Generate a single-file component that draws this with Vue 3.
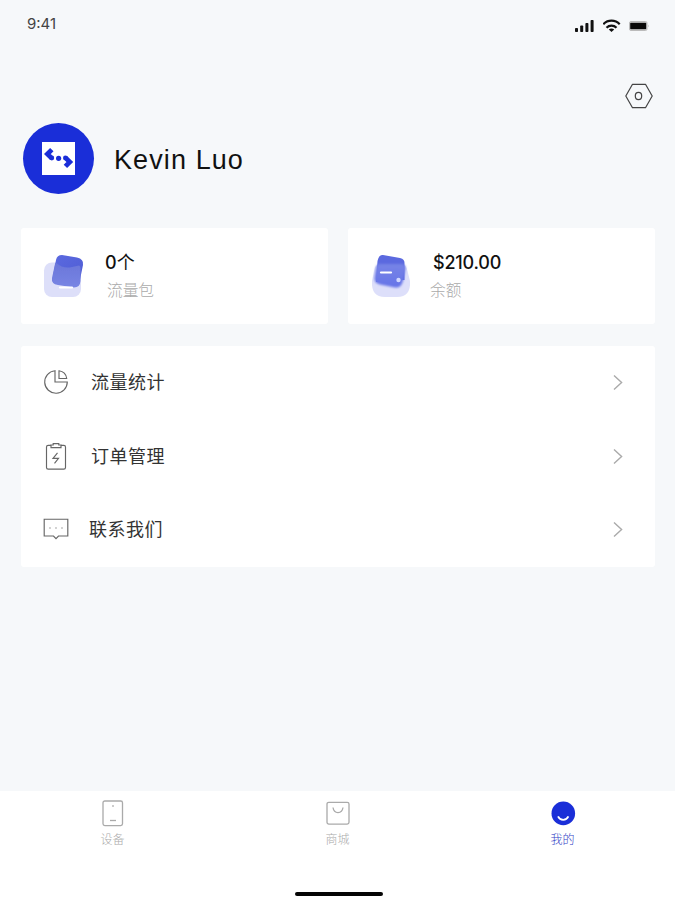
<template>
  <div class="page">
    <header class="status-bar">
      <span class="time">9:41</span>
      <div class="status-icons">
        <svg width="20" height="14" viewBox="0 0 20 14" fill="#111">
          <rect x="0" y="9" width="3" height="4" rx="0.8" />
          <rect x="5.2" y="6.5" width="3" height="6.5" rx="0.8" />
          <rect x="10.4" y="4" width="3" height="9" rx="0.8" />
          <rect x="15.6" y="1" width="3" height="12" rx="0.8" />
        </svg>
        <svg width="18" height="14" viewBox="0 0 18 14" fill="none" stroke="#111" stroke-width="2.2">
          <path d="M0.3 5.2C4.7 .5 12.3 .5 16.7 5.2" />
          <path d="M3.5 8.7C6.2 5.9 10.8 5.9 13.5 8.7" />
          <path d="M5.8 10.4C7.3 9.2 9.7 9.2 11.2 10.4L8.5 13Z" fill="#111" stroke="none" />
        </svg>
        <svg width="21" height="10" viewBox="0 0 21 10">
          <rect x="0.5" y="0.5" width="17.5" height="9" rx="1.5" fill="#ddd" stroke="#bbb" />
          <rect x="1.2" y="1.8" width="16" height="6.4" rx="0.6" fill="#080808" />
          <path d="M19 3.5Q20.5 5 19 6.5Z" fill="#bbb" />
        </svg>
      </div>
    </header>

    <div class="toolbar">
      <svg width="28" height="26" viewBox="0 0 28 26" fill="none" stroke="#444" stroke-width="1.2">
        <path d="M7.5 1.3H20.5L27.2 13L20.5 24.7H7.5L0.8 13Z" stroke-linejoin="round" />
        <ellipse cx="13.5" cy="13" rx="3.2" ry="3.6" />
      </svg>
    </div>

    <section class="profile">
      <div class="avatar">
        <svg width="33" height="33" viewBox="0 0 33 33">
          <rect width="33" height="33" fill="#fff" />
          <g fill="none" stroke="#1a2ed8" stroke-width="4.8">
            <path d="M9.8 7.6L5.4 12L9.8 16.4" />
            <path d="M23.4 15.6L27.8 20L23.4 24.4" />
          </g>
          <g fill="#1a2ed8">
            <circle cx="9.8" cy="16" r="2.4" />
            <circle cx="16.6" cy="16.3" r="2.6" />
            <circle cx="23.4" cy="16" r="2.4" />
          </g>
        </svg>
      </div>
      <h1 class="name">Kevin Luo</h1>
    </section>

    <section class="cards">
      <div class="card">
        <svg class="cube" width="42" height="46" viewBox="0 0 42 46">
          <defs>
            <linearGradient id="packBack" x1="0" y1="0" x2="0.8" y2="1">
              <stop offset="0" stop-color="#5b6ae0" />
              <stop offset="1" stop-color="#4f5cd4" />
            </linearGradient>
            <linearGradient id="packFront" x1="0" y1="0" x2="0" y2="1">
              <stop offset="0" stop-color="#6a76d9" />
              <stop offset="1" stop-color="#7885e4" />
            </linearGradient>
            <filter id="packSoft" x="-20%" y="-20%" width="140%" height="140%">
              <feGaussianBlur stdDeviation="0.7" />
            </filter>
          </defs>
          <rect x="1" y="9.5" width="37" height="34.5" rx="8" fill="#dddff9" />
          <path d="M19 2L34 4.5Q41 6 40 12L36.5 29Q35.5 34 30 33L14 29Q9 28 10 23L13 7Q14 2 19 2Z" fill="url(#packBack)" />
          <path d="M13.5 10Q20 16 29 14L36 12.5Q38 13 37.5 17V28Q37 34.5 31 34.5L15 32Q8 31 9 25L12 11Q12.5 9 13.5 10Z" fill="url(#packFront)" filter="url(#packSoft)" />
          <path d="M17 34.5H29" stroke="#fff" stroke-width="2.2" stroke-linecap="round" />
        </svg>
        <div class="card-text">
          <strong>0<i>个</i></strong>
          <span>流量包</span>
        </div>
      </div>
      <div class="card balance">
        <svg class="cube" width="42" height="46" viewBox="0 0 42 46">
          <defs>
            <linearGradient id="moneyFront" x1="0" y1="0" x2="0" y2="1">
              <stop offset="0" stop-color="#7784e6" />
              <stop offset="1" stop-color="#6674e8" />
            </linearGradient>
            <filter id="moneySoft" x="-20%" y="-20%" width="140%" height="140%">
              <feGaussianBlur stdDeviation="0.8" />
            </filter>
          </defs>
          <path d="M10 11H32Q36 11 37.5 18L40 28Q41 44 27 44H15Q1 44 2 28L4 18Q5 11 10 11Z" fill="#dddffa" />
          <path d="M13 2L30 5Q35 6 34.5 11V27L6 29L7.5 8Q9 1 13 2Z" fill="#5b69df" />
          <path d="M10 11H31Q36 11 35.5 16L33 28Q31 35.5 25 34.5L10 31.5Q4 30 4.5 25L6 15Q6.5 11 10 11Z" fill="url(#moneyFront)" filter="url(#moneySoft)" />
          <path d="M11 19.5H21" stroke="#fff" stroke-width="2.2" stroke-linecap="round" />
          <circle cx="28.5" cy="27" r="2.2" fill="#d0d7ff" />
        </svg>
        <div class="card-text">
          <strong>$210.00</strong>
          <span>余额</span>
        </div>
      </div>
    </section>

    <ul class="menu">
      <li v-for="item in menuItems" :key="item.icon" :class="item.icon">
        <svg class="menu-icon" width="26" height="28" viewBox="0 0 26 28" fill="none" stroke="#666" stroke-width="1.15">
          <template v-if="item.icon === 'chart'">
            <path d="M12 1.7A11.3 11.3 0 1 0 24.3 13H12Z" />
            <path d="M16 1.8V9.5H23.7A9 9 0 0 0 16 1.8Z" />
          </template>
          <template v-else-if="item.icon === 'order'">
            <path d="M8 2.4H5.2Q3.5 2.4 3.5 4.1V24.4Q3.5 26.1 5.2 26.1H20.8Q22.5 26.1 22.5 24.4V4.1Q22.5 2.4 20.8 2.4H18" />
            <path d="M8 4.6H18V2H15.8V0.6H10.2V2H8Z" />
            <path d="M14.5 9.8L10 15.3H15.5L11.5 20.3" />
          </template>
          <template v-else>
            <path d="M1.2 3.2H24.8V20H15.5L13 22.7L10.5 20H1.2Z" />
            <path d="M7 11.2V12.8M13 11.2V12.8M19 11.2V12.8" stroke="#999" />
          </template>
        </svg>
        <span class="label">{{ item.label }}</span>
        <svg class="arrow" width="10" height="16" viewBox="0 0 10 16" fill="none" stroke="#aaa" stroke-width="1.4">
          <path d="M1 0.5L8.6 7.5L1 14.5" />
        </svg>
      </li>
    </ul>

    <footer class="bottom">
      <nav class="tabs">
        <div v-for="tab in tabs" :key="tab.icon" class="tab" :class="{ active: tab.icon === current }">
          <svg width="26" height="28" viewBox="0 0 26 28" fill="none" stroke="#aaa" stroke-width="1.3">
            <template v-if="tab.icon === 'device'">
              <rect x="3" y="1" width="19.5" height="24.6" rx="1.8" />
              <path d="M10 20.5H16" />
              <path d="M12 6H14" stroke="#bbb" />
            </template>
            <template v-else-if="tab.icon === 'shop'">
              <rect x="2" y="2.3" width="22" height="21.8" rx="1.8" />
              <path d="M8 7.5C9 14.2 17 14.2 18 7.5" />
            </template>
            <template v-else>
              <circle cx="13.3" cy="13.4" r="11.8" fill="#1a2ed8" stroke="none" />
              <path d="M8 16.3C10.3 21 16.1 21 18.4 16.3" stroke="#fff" stroke-width="1.8" />
            </template>
          </svg>
          <span>{{ tab.label }}</span>
        </div>
      </nav>
      <div class="home-bar"></div>
    </footer>
  </div>
</template>

<script setup>
import { ref } from "vue";

const current = ref("mine");

const menuItems = [
  { icon: "chart", label: "流量统计" },
  { icon: "order", label: "订单管理" },
  { icon: "contact", label: "联系我们" },
];

const tabs = [
  { icon: "device", label: "设备" },
  { icon: "shop", label: "商城" },
  { icon: "mine", label: "我的" },
];
</script>

<style>
body {
  background: #f6f8fa;
}
</style>

<style scoped>
.page {
  height: 900px;
  display: flex;
  flex-direction: column;
  background: #f6f8fa;
  color: #111;
  font-family: "Inter", "Noto Sans CJK SC", sans-serif;
}

svg {
  display: block;
  flex-shrink: 0;
}

/* Thanh trạng thái */
.status-bar {
  height: 48px;
  box-sizing: border-box;
  padding: 0 25px 0 27px;
  display: flex;
  align-items: center;
  justify-content: space-between;
}

.time {
  font-size: 15px;
  line-height: 46px;
  color: #444;
}

.status-icons {
  display: flex;
  align-items: center;
  gap: 8px;
  padding-top: 4px;
}

.toolbar {
  height: 26px;
  padding: 35px 22px 0 0;
  display: flex;
  justify-content: flex-end;
}

/* Thông tin người dùng */
.profile {
  height: 72px;
  margin-top: 13px;
  padding-left: 23px;
  display: flex;
  align-items: center;
  gap: 20px;
}

.avatar {
  width: 71px;
  height: 71px;
  border-radius: 50%;
  background: #1a2ed8;
  display: flex;
  align-items: center;
  justify-content: center;
}

.name {
  margin: 0;
  padding-top: 3px;
  font-family: "Liberation Sans", sans-serif;
  font-size: 27px;
  line-height: 34px;
  font-weight: 400;
  letter-spacing: 1.1px;
}

/* Thẻ số dư */
.cards {
  margin: 34px 20px 0 21px;
  display: grid;
  grid-template-columns: 1fr 1fr;
  gap: 20px;
}

.card {
  height: 96px;
  box-sizing: border-box;
  padding: 0 0 0 22px;
  display: flex;
  align-items: center;
  gap: 20px;
  background: #fff;
  border-radius: 3px;
}

.card-text {
  display: flex;
  flex-direction: column;
  gap: 4px;
}

.card-text strong {
  font-size: 18px;
  line-height: 25px;
  font-weight: 500;
}

.card-text i {
  font-style: normal;
  font-weight: 400;
}

.card-text span {
  padding-left: 2px;
  font-size: 15.7px;
  line-height: 23px;
  font-weight: 300;
  color: #aaa;
}

.balance .card-text strong {
  padding-left: 1px;
  letter-spacing: -0.2px;
}

.balance .card-text span {
  padding-left: 0;
  margin-left: -2px;
}

/* Danh sách chức năng */
.menu {
  height: 221px;
  margin: 22px 20px 0 21px;
  padding: 0;
  display: flex;
  flex-direction: column;
  list-style: none;
  background: #fff;
  border-radius: 3px;
}

.menu li {
  flex: 1;
  padding: 0 32px 0 22px;
  display: flex;
  align-items: center;
}

.label {
  flex: 1;
  margin-left: 22px;
  font-size: 18px;
  line-height: 26px;
  letter-spacing: 0.5px;
  font-weight: 400;
  color: #333;
}

.contact .label {
  margin-left: 20px;
}

/* Thanh điều hướng */
.bottom {
  height: 109px;
  margin-top: auto;
  display: flex;
  flex-direction: column;
  align-items: center;
  justify-content: space-between;
  background: #fff;
}

.tabs {
  width: 100%;
  padding-top: 9px;
  display: grid;
  grid-template-columns: repeat(3, 1fr);
}

.tab {
  display: flex;
  flex-direction: column;
  align-items: center;
  gap: 3px;
}

.tab span {
  font-size: 12px;
  line-height: 18px;
  font-weight: 300;
  color: #aaa;
}

.tab.active span {
  color: #3442c6;
}

.home-bar {
  width: 88px;
  height: 4px;
  margin-left: 3px;
  margin-bottom: 4px;
  border-radius: 2px;
  background: #050505;
}
</style>
